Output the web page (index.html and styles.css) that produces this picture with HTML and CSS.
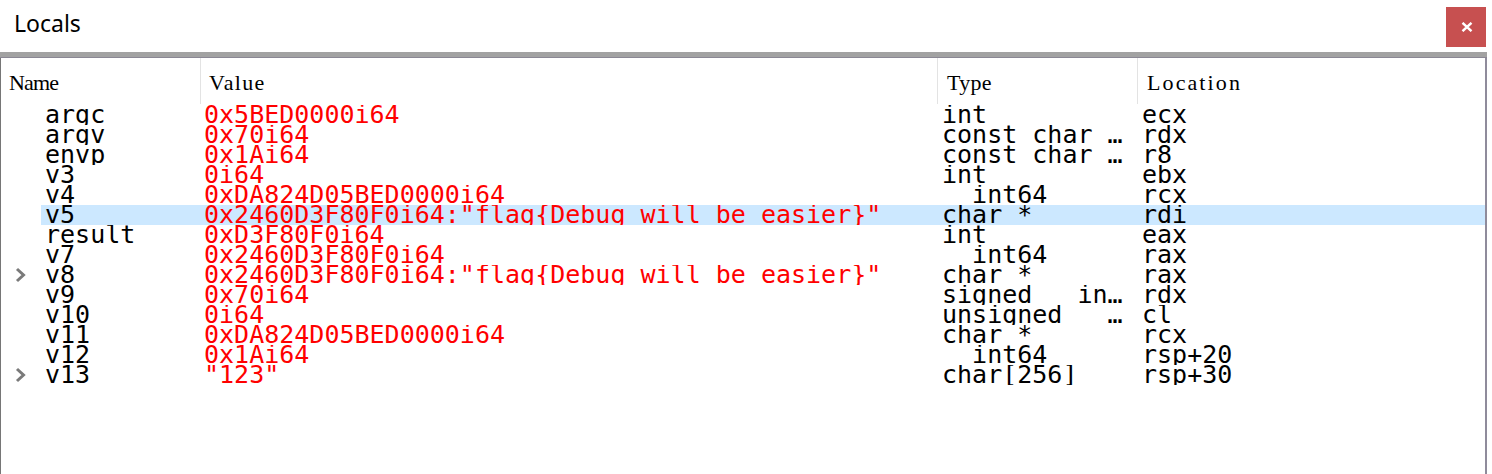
FILE: index.html
```html
<!DOCTYPE html>
<html>
<head>
<meta charset="utf-8">
<link rel="stylesheet" href="styles.css">
</head>
<body>
<div class="window">
  <div class="titlebar">
    <span class="title">Locals</span>
    <button class="close" aria-label="Close">
      <svg width="12" height="10" viewBox="0 0 12 10"><path d="M1.5 0.8 L10.5 9.2 M10.5 0.8 L1.5 9.2" stroke="#fff" stroke-width="2.4" fill="none"/></svg>
    </button>
  </div>
  <div class="splitter"></div>
  <div class="panel">
    <div class="header">
      <div class="hcell c-name">Name</div>
      <div class="hcell c-value">Value</div>
      <div class="hcell c-type">Type</div>
      <div class="hcell c-loc">Location</div>
    </div>
    <div class="rows">
      <div class="row"><div class="exp"></div><div class="cells"><div class="cell n">argc</div><div class="cell v">0x5BED0000i64</div><div class="cell t">int</div><div class="cell l">ecx</div></div></div>
      <div class="row"><div class="exp"></div><div class="cells"><div class="cell n">argv</div><div class="cell v">0x70i64</div><div class="cell t">const char …</div><div class="cell l">rdx</div></div></div>
      <div class="row"><div class="exp"></div><div class="cells"><div class="cell n">envp</div><div class="cell v">0x1Ai64</div><div class="cell t">const char …</div><div class="cell l">r8</div></div></div>
      <div class="row"><div class="exp"></div><div class="cells"><div class="cell n">v3</div><div class="cell v">0i64</div><div class="cell t">int</div><div class="cell l">ebx</div></div></div>
      <div class="row"><div class="exp"></div><div class="cells"><div class="cell n">v4</div><div class="cell v">0xDA824D05BED0000i64</div><div class="cell t">__int64</div><div class="cell l">rcx</div></div></div>
      <div class="row"><div class="exp"></div><div class="cells selected"><div class="cell n">v5</div><div class="cell v">0x2460D3F80F0i64:"flag{Debug will be easier}"</div><div class="cell t">char *</div><div class="cell l">rdi</div></div></div>
      <div class="row"><div class="exp"></div><div class="cells"><div class="cell n">result</div><div class="cell v">0xD3F80F0i64</div><div class="cell t">int</div><div class="cell l">eax</div></div></div>
      <div class="row"><div class="exp"></div><div class="cells"><div class="cell n">v7</div><div class="cell v">0x2460D3F80F0i64</div><div class="cell t">__int64</div><div class="cell l">rax</div></div></div>
      <div class="row"><div class="exp"><svg class="chev" width="11" height="16" viewBox="0 0 11 16"><polyline points="2,2 8.5,8 2,14" fill="none" stroke="#7a7a7a" stroke-width="3"/></svg></div><div class="cells"><div class="cell n">v8</div><div class="cell v">0x2460D3F80F0i64:"flag{Debug will be easier}"</div><div class="cell t">char *</div><div class="cell l">rax</div></div></div>
      <div class="row"><div class="exp"></div><div class="cells"><div class="cell n">v9</div><div class="cell v">0x70i64</div><div class="cell t">signed __in…</div><div class="cell l">rdx</div></div></div>
      <div class="row"><div class="exp"></div><div class="cells"><div class="cell n">v10</div><div class="cell v">0i64</div><div class="cell t">unsigned __…</div><div class="cell l">cl</div></div></div>
      <div class="row"><div class="exp"></div><div class="cells"><div class="cell n">v11</div><div class="cell v">0xDA824D05BED0000i64</div><div class="cell t">char *</div><div class="cell l">rcx</div></div></div>
      <div class="row"><div class="exp"></div><div class="cells"><div class="cell n">v12</div><div class="cell v">0x1Ai64</div><div class="cell t">__int64</div><div class="cell l">rsp+20</div></div></div>
      <div class="row"><div class="exp"><svg class="chev" width="11" height="16" viewBox="0 0 11 16"><polyline points="2,2 8.5,8 2,14" fill="none" stroke="#7a7a7a" stroke-width="3"/></svg></div><div class="cells"><div class="cell n">v13</div><div class="cell v">"123"</div><div class="cell t">char[256]</div><div class="cell l">rsp+30</div></div></div>
    </div>
  </div>
</div>
</body>
</html>
```

FILE: styles.css
```css
html, body {
  margin: 0;
  padding: 0;
  background: #ffffff;
  height: 100%;
  overflow: hidden;
}

.window {
  width: 1487px;
  height: 474px;
  display: flex;
  flex-direction: column;
}

.titlebar {
  height: 52px;
  display: flex;
  justify-content: space-between;
  align-items: flex-start;
  background: #ffffff;
}

.title {
  font-family: "Noto Sans", "Open Sans", sans-serif;
  font-size: 23px;
  line-height: 30px;
  color: #000000;
  padding-top: 8px;
  padding-left: 14px;
}

.close {
  width: 40px;
  height: 40px;
  margin-top: 7px;
  margin-right: 1px;
  border: none;
  padding: 0;
  background: #c75050;
  display: flex;
  align-items: center;
  justify-content: center;
}

.close svg {
  display: block;
  margin-left: 1px;
}

.splitter {
  height: 5px;
  background: #a2a2a2;
  border-bottom: 1px solid #8a8794;
}

.panel {
  flex: 1;
  border-left: 1px solid #767676;
  border-right: 2px solid #8f8b9b;
  background: #ffffff;
  display: flex;
  flex-direction: column;
}

.header {
  height: 47px;
  display: flex;
}

.hcell {
  font-family: "Liberation Serif", "DejaVu Serif", serif;
  font-size: 22px;
  letter-spacing: 1.3px;
  line-height: 20px;
  color: #000000;
  padding-top: 15px;
  padding-left: 8px;
  height: 46px;
  box-sizing: border-box;
  white-space: nowrap;
}

.hcell.c-name { width: 199px; letter-spacing: -0.8px; }
.hcell.c-value { width: 737px; border-left: 1px solid #e3e3e3; }
.hcell.c-type { width: 200px; border-left: 1px solid #e3e3e3; padding-left: 9px; letter-spacing: 0.3px; }
.hcell.c-loc { flex: 1; border-left: 1px solid #e3e3e3; padding-left: 9px; letter-spacing: 2.1px; }

.rows {
  display: flex;
  flex-direction: column;
}

.row {
  height: 20px;
  display: flex;
}

.exp {
  width: 40px;
  height: 20px;
  display: flex;
  align-items: center;
  padding-left: 14px;
  box-sizing: border-box;
}

.chev {
  display: block;
}

.cells {
  flex: 1;
  display: flex;
  height: 20px;
}

.cells.selected {
  background: #cce8ff;
}

.cell {
  font-family: "DejaVu Sans Mono", monospace;
  font-size: 25px;
  line-height: 20px;
  height: 20px;
  overflow: hidden;
  white-space: pre;
  color: #000000;
  box-sizing: border-box;
}

.cell.n { width: 159px; padding-left: 4px; }
.cell.v { width: 737px; padding-left: 4px; color: #ff0000; }
.cell.t { width: 200px; padding-left: 5px; }
.cell.l { flex: 1; padding-left: 5px; }
```
